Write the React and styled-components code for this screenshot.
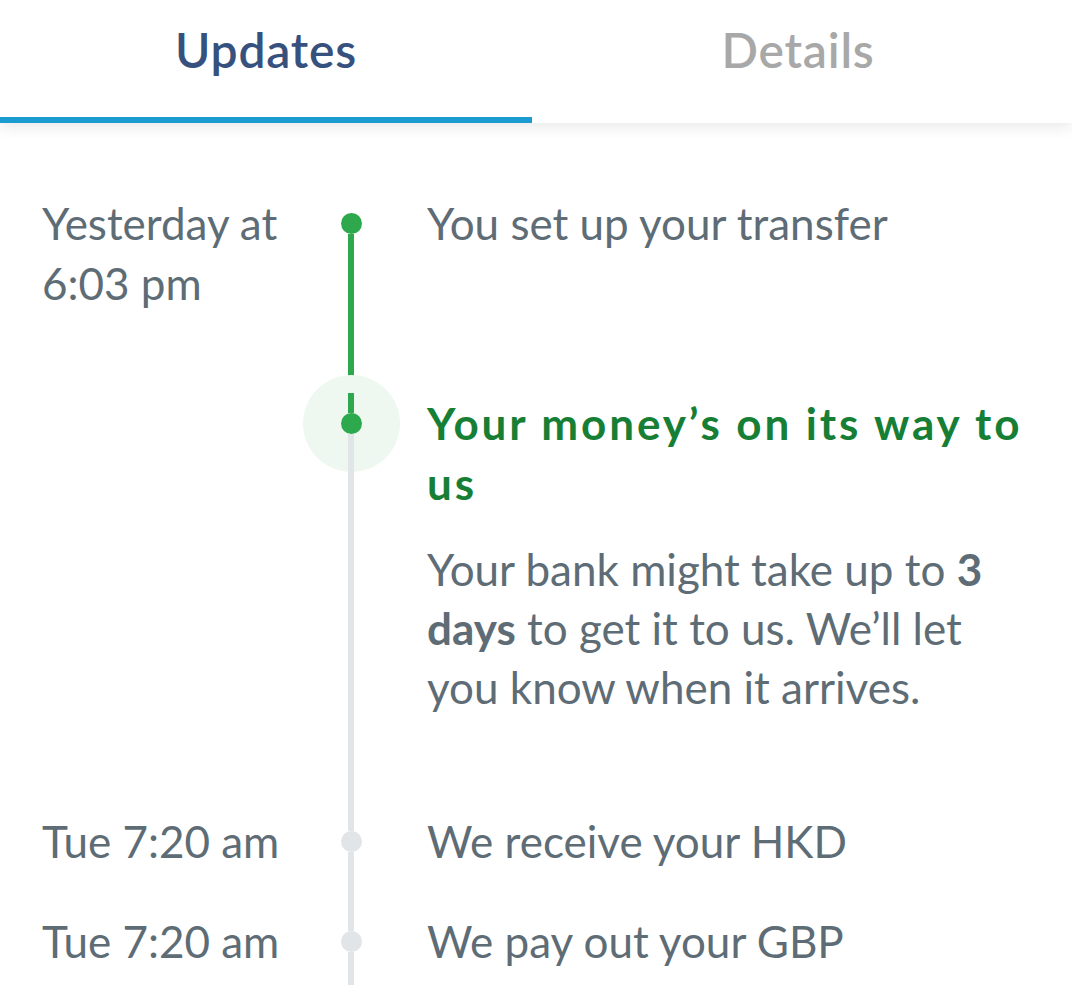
import React from "react";
import styled, { createGlobalStyle } from "styled-components";

const Global = createGlobalStyle`
  html, body { margin: 0; padding: 0; background: #ffffff; }
  body { font-family: Lato, "Open Sans", sans-serif; overflow: hidden; }
  * { box-sizing: border-box; }
`;

const Page = styled.div`
  position: relative;
  width: 1072px;
  height: 985px;
  overflow: hidden;
  background: #fff;
`;

const TabBar = styled.div`
  display: flex;
  height: 123px;
  padding-right: 8px;
  background: #fff;
  box-shadow: 0 4px 14px rgba(0, 0, 0, 0.09);
  position: relative;
  z-index: 2;
`;

const Tab = styled.div`
  flex: 1;
  display: flex;
  align-items: flex-start;
  justify-content: center;
  padding-top: 22px;
  font-size: 48px;
  line-height: 56px;
  font-weight: 600;
  letter-spacing: 0.8px;
  color: ${(p) => (p.$active ? "#37517e" : "#a8a8a8")};
  border-bottom: 6px solid ${(p) => (p.$active ? "#1c9bd0" : "transparent")};
`;

const Timeline = styled.div`
  display: flex;
  flex-direction: column;
  padding: 70px 42px 0 42px;
`;

const Row = styled.div`
  display: grid;
  grid-template-columns: 269px 80px 1fr;
  min-height: ${(p) => p.$h}px;
`;

const Time = styled.div`
  font-size: 44px;
  line-height: 60px;
  color: #5e6c76;
`;

const Rail = styled.div`
  position: relative;
  z-index: 0;
  display: flex;
  flex-direction: column;
  align-items: center;
`;

const Segment = styled.div`
  width: 6px;
  flex: ${(p) => (p.$grow ? 1 : "none")};
  height: ${(p) => (p.$grow ? "auto" : "20px")};
  background: ${(p) => p.$color};
`;

const Dot = styled.div`
  position: relative;
  width: 21px;
  height: 21px;
  border-radius: 50%;
  background: ${(p) => p.$color};
  ${(p) =>
    p.$halo &&
    `
    &::before {
      content: "";
      position: absolute;
      left: 50%;
      top: 50%;
      width: 97px;
      height: 97px;
      margin: -48.5px 0 0 -48.5px;
      border-radius: 50%;
      background: #eff8f0;
      z-index: -1;
    }
  `}
`;

const Content = styled.div`
  padding-left: 36px;
  padding-bottom: ${(p) => p.$pb || 0}px;
`;

const Title = styled.div`
  font-size: 44px;
  line-height: 60px;
  color: ${(p) => (p.$current ? "#177f35" : "#5e6c76")};
  font-weight: ${(p) => (p.$current ? 700 : 400)};
  letter-spacing: ${(p) => (p.$current ? "2.9px" : "0")};
`;

const Body = styled.p`
  margin: 27px 0 0;
  font-size: 44px;
  line-height: 59px;
  color: #5e6c76;

  b {
    font-weight: 700;
  }
`;

const Corner = styled.svg`
  position: absolute;
  top: 0;
  right: 0;
  width: 12px;
  height: 30px;
`;

const GREEN = "#2ea84d";
const GREY = "#e2e5e8";

export default function App() {
  return (
    <Page>
      <Global />
      <TabBar>
        <Tab $active>Updates</Tab>
        <Tab>Details</Tab>
      </TabBar>
      <Timeline>
        <Row $h={200}>
          <Time>
            Yesterday at
            <br />
            6:03 pm
          </Time>
          <Rail>
            <Segment $color="transparent" />
            <Dot $color={GREEN} />
            <Segment $grow $color={GREEN} />
          </Rail>
          <Content>
            <Title>You set up your transfer</Title>
          </Content>
        </Row>
        <Row $h={418}>
          <Time />
          <Rail>
            <Segment $color={GREEN} />
            <Dot $color={GREEN} $halo />
            <Segment $grow $color={GREY} />
          </Rail>
          <Content $pb={94}>
            <Title $current>Your money’s on its way to us</Title>
            <Body>
              Your bank might take up to <b>3 days</b> to get it to us. We’ll let
              you know when it arrives.
            </Body>
          </Content>
        </Row>
        <Row $h={100}>
          <Time>Tue 7:20 am</Time>
          <Rail>
            <Segment $color={GREY} />
            <Dot $color={GREY} />
            <Segment $grow $color={GREY} />
          </Rail>
          <Content>
            <Title>We receive your HKD</Title>
          </Content>
        </Row>
        <Row $h={100}>
          <Time>Tue 7:20 am</Time>
          <Rail>
            <Segment $color={GREY} />
            <Dot $color={GREY} />
            <Segment $grow $color={GREY} />
          </Rail>
          <Content>
            <Title>We pay out your GBP</Title>
          </Content>
        </Row>
      </Timeline>
      <Corner viewBox="0 0 12 30">
        <path d="M4 0 Q9 9 12 26 L12 0 Z" fill="#1f2d52" />
      </Corner>
    </Page>
  );
}
